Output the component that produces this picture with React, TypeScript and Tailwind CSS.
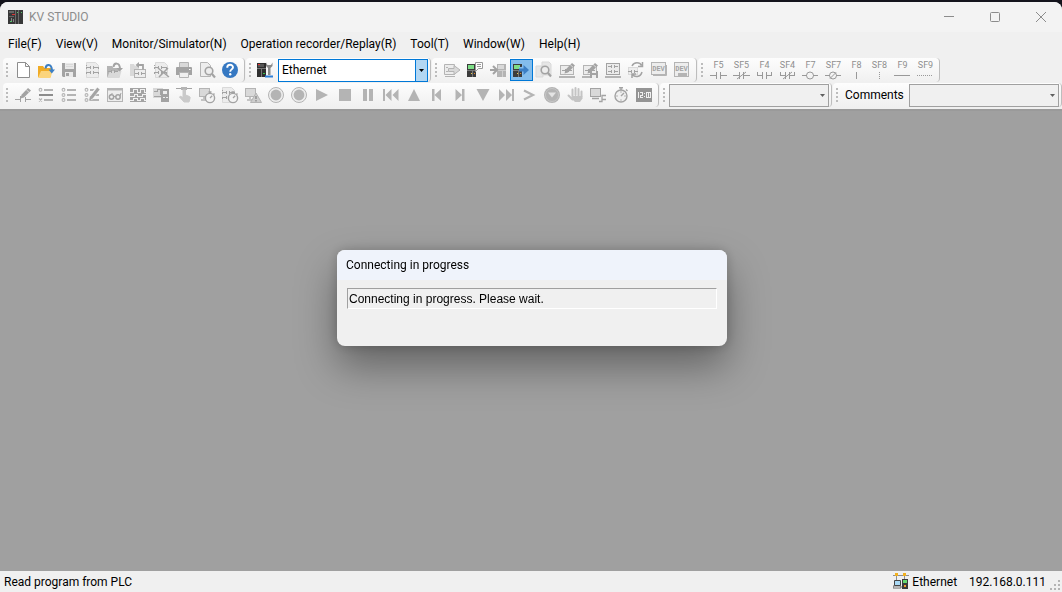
import type { ReactNode } from "react";

const G = "#b4b4b4";
const D = "#a3a3a3";
const L = "#d9d9d9";

/* ---------- icon building blocks (23 x 22 drawing area) ---------- */

const Page = () => (
  <path d="M5.5 3.5h9l3 3v12h-12z" fill="#ececec" stroke={L} />
);

const Rungs = ({ x = 0, y = 0, c = D }: { x?: number; y?: number; c?: string }) => (
  <g transform={`translate(${x} ${y})`} stroke={c} fill="none" shapeRendering="crispEdges">
    <path d="M5.5 6v1M5.500 8v2M5.500 13v2M17.5 8v2M17.500 13v2M6 8.500h3M9.500 7v3M12.500 7v3M13 8.500h5M6 13.500h3M9.500 12v3M12.500 12v3M13 13.500h5" />
  </g>
);

const Contact = ({ x, y, c = D }: { x: number; y: number; c?: string }) => (
  <path
    transform={`translate(${x} ${y})`}
    d="M0 2.500h3.500M3.500 1v3M6.500 1v3M6.500 2.500h3.500"
    stroke={c}
    fill="none"
    shapeRendering="crispEdges"
  />
);

const Watch = ({ x = 0, y = 0 }: { x?: number; y?: number }) => (
  <g transform={`translate(${x} ${y})`} fill="#f4f4f4" stroke={D}>
    <circle cx="14" cy="14" r="4.600" strokeWidth="1.400" />
    <path d="M12.500 8h3M14 8v2M17.500 9.500l1 1M14 14l2.200-2.200" fill="none" strokeWidth="1.300" />
  </g>
);

const Monitor = ({ w = 10 }: { w?: number }) => (
  <g>
    <rect x="3.500" y="4.500" width={w} height="8" fill={L} stroke={G} />
    <path d={`M8 13v2M5 16h7`} stroke={G} strokeWidth="1.500" />
  </g>
);

const Pencil = () => (
  <g>
    <path d="M16 4l3 2.500-7 7-3.500 1 1-3.700z" fill={D} />
    <path d="M14.300 5.800l2.800 2.500" stroke="#f4f4f4" strokeWidth=".7" />
  </g>
);

const Folder = ({ a, b }: { a: string; b: string }) => (
  <g>
    <path d="M3 7h5l1.500 2H16v9H3z" fill={a} />
    <path d="M6 12h11.500L15.500 19H3z" fill={b} />
  </g>
);

const Laptop = () => (
  <g>
    <rect x="4.500" y="6.500" width="13" height="9" fill="#ececec" stroke={G} />
    <path d="M3 17h16v2H3z" fill={G} />
    <Contact x={6} y={9} />
  </g>
);

const Plc = ({ x = 3, y = 5, c = "#3c3c3c", s = "#7dde86", dim = false }: { x?: number; y?: number; c?: string; s?: string; dim?: boolean }) => (
  <g transform={`translate(${x} ${y})`} shapeRendering="crispEdges">
    <path d="M0 0h9v13H0z" fill={c} />
    <path d="M1 1h6v4H1z" fill={s} />
    <path d="M0 6h9v1H0zM5 7h1v6H5z" fill={dim ? "#d0d0d0" : "#777"} />
    {!dim && <path d="M4 9h1v1H4z" fill="#e8c84a" />}
    {!dim && <path d="M7 9h1v1H7z" fill="#e88a2a" />}
  </g>
);

const Arrow = ({ x = 0, y = 0, c = G }: { x?: number; y?: number; c?: string }) => (
  <path
    transform={`translate(${x} ${y})`}
    d="M0 4h6M3 0l4 4-4 4"
    stroke={c}
    strokeWidth="2"
    fill="none"
  />
);

const Lens = () => (
  <g>
    <circle cx="13" cy="12" r="3.800" fill="#ededed" stroke={D} strokeWidth="1.600" />
    <path d="M15.800 14.800L19 18.500" stroke={D} strokeWidth="2.200" />
  </g>
);

const List = ({ strong = false }: { strong?: boolean }) => (
  <g>
    <g fill="none" stroke={G} strokeWidth="1.100">
      <circle cx="5.500" cy="5.800" r="1.400" />
      {!strong && <circle cx="5.500" cy="11" r="1.400" />}
      {strong ? <path d="M4 14.500l3 3M7 14.500l-3 3" /> : <circle cx="5.500" cy="16" r="1.400" />}
    </g>
    <path d="M9 5h9v2H9zM9 15h9v2H9z" fill={G} />
    <path d={strong ? "M4 10h14v2H4z" : "M9 10h9v2H9z"} fill={strong ? "#8d8d8d" : G} />
  </g>
);

const Record = () => (
  <g>
    <circle cx="11" cy="11" r="7.500" fill="#ededed" stroke={G} />
    <circle cx="11" cy="11" r="5.400" fill={G} />
  </g>
);

const Dev = ({ children }: { children?: ReactNode }) => (
  <g>
    {children}
    <text x="10.500" y="12" textAnchor="middle" fontSize="7" fontWeight="700" fill={D} fontFamily="'Liberation Mono', monospace">
      DEV
    </text>
  </g>
);

type Item = { label: string; art: ReactNode; active?: boolean };

/* ---------- toolbars ---------- */

const fileTools: Item[] = [
  {
    label: "New",
    art: <path d="M5.500 3.500h8l4 4v11h-12zM13.500 3.500v4h4" fill="#fff" stroke="#8d8d8d" />,
  },
  {
    label: "Open",
    art: (
      <g>
        <Folder a="#f0ab25" b="#fbd47c" />
        <path d="M10.500 9.500c.5-4.500 6-5.500 6.500 2" fill="none" stroke="#3c7fc4" strokeWidth="2" />
        <path d="M13.500 10.500h6.500l-3.200 4z" fill="#3c7fc4" />
      </g>
    ),
  },
  {
    label: "Save",
    art: (
      <g>
        <path d="M4 4h14v14H5l-1-1z" fill={D} />
        <path d="M7 4h9v6H7z" fill="#e9e9e9" />
        <path d="M8 5.500h7M8 7.500h7" stroke={L} />
        <path d="M7 13h8v5H7z" fill="#e9e9e9" />
        <path d="M8 14h3v3H8z" fill={D} />
      </g>
    ),
  },
  { label: "Ladder", art: <g><Page /><Rungs /></g> },
  {
    label: "Open ladder",
    art: (
      <g>
        <Folder a={G} b={L} />
        <Contact x={4} y={10} c={D} />
        <path d="M9.500 8c.5-4.500 6-5 6.500 1.500" fill="none" stroke={D} strokeWidth="2" />
        <path d="M12.500 9h6.500l-3.200 3.500z" fill={D} />
      </g>
    ),
  },
  {
    label: "Store ladder",
    art: (
      <g>
        <path d="M3 5h4l1 2h4v10H3z" fill={L} />
        <rect x="7.500" y="10.500" width="11" height="8" fill="#ededed" stroke={G} />
        <Contact x={8} y={12} />
        <path d="M10 6h6v4.500" fill="none" stroke={D} strokeWidth="1.800" />
        <path d="M12 3v6L8.500 6z" fill={D} />
      </g>
    ),
  },
  {
    label: "Delete ladder",
    art: <g><Page /><Rungs x={-1} /><path d="M8 9l11 9M18 9L9 18" stroke={D} strokeWidth="1.500" /></g>,
  },
  {
    label: "Print",
    art: (
      <g>
        <path d="M6.500 3.500h9v5h-9z" fill={L} stroke={G} />
        <path d="M3 9q0-1 1-1h14q1 0 1 1v7H3z" fill={D} />
        <path d="M6.500 13.500h9v5h-9z" fill="#efefef" stroke={G} />
        <path d="M16 10.500h1.500" stroke="#fff" />
      </g>
    ),
  },
  { label: "Preview", art: <g><path d="M4.500 3.500h7l3 3v11h-10z" fill="#ededed" stroke={G} /><Lens /></g> },
  {
    label: "Help",
    art: (
      <g>
        <circle cx="11" cy="11" r="8" fill="#3578c2" />
        <path d="M8.200 8.800c0-4 5.800-3.800 5.800-.5 0 2-2.800 2.200-2.800 4.400" fill="none" stroke="#fff" strokeWidth="1.900" />
        <circle cx="11.200" cy="15.300" r="1.200" fill="#fff" />
      </g>
    ),
  },
];

const plcTools: Item[] = [
  {
    label: "Transfer to PLC",
    art: (
      <g>
        <path d="M3.500 5.500h10v10h-10zM4 17.500h10" fill="#ececec" stroke={G} />
        <path d="M5 8.500h2M5 12.500h2" stroke={G} />
        <path d="M7.500 9.500h5.500V6.500l6 4.500-6 4.500v-3H7.500z" fill={L} stroke={G} />
      </g>
    ),
  },
  {
    label: "Transfer with comment",
    art: (
      <g>
        <Plc />
        <path d="M11.500 3.500h7v6h-4l-3 3v-3z" fill="#fff" stroke="#9a9a9a" />
        <path d="M13 5.500h4M13 7.500h4" stroke="#9a9a9a" />
      </g>
    ),
  },
  {
    label: "Read and monitor",
    art: <g><Plc x={10} c={G} s={L} dim /><Arrow x={3} y={7} c={D} /></g>,
  },
  {
    label: "Read from PLC",
    active: true,
    art: (
      <g>
        <Plc />
        <path d="M9 10h4M13 6l5.500 5-5.500 5" fill="none" stroke="#84bdec" strokeWidth="4" />
        <path d="M9 9.500h4.500V6l5.500 5-5.500 5v-3.500H9z" fill="#3c7fc4" />
      </g>
    ),
  },
  {
    label: "Verify",
    art: <g><path d="M9 3h7l2 2v11H9zM3 7h7v11H3z" fill="#e6e6e6" stroke={L} /><g transform="translate(-1 -1)"><Lens /></g></g>,
  },
  { label: "Monitor edit", art: <g><Laptop /><Pencil /></g> },
  {
    label: "Edit and save",
    art: <g><Laptop /><Pencil /><path d="M11 12h8v7h-8z" fill={D} /><path d="M13 12h4v2h-4zM13 16h4v3h-4z" fill="#eee" /></g>,
  },
  {
    label: "Simulator",
    art: (
      <g>
        <rect x="4.500" y="4.500" width="13" height="11" fill="#ececec" stroke={D} />
        <Contact x={6} y={5} />
        <Contact x={6} y={10} />
        <path d="M3 17h16v2H3z" fill={G} />
      </g>
    ),
  },
  {
    label: "Refresh",
    art: (
      <g>
        <rect x="3.500" y="8.500" width="9" height="7" fill="#ededed" stroke={L} />
        <Contact x={3} y={10} />
        <path d="M7 7c2-4.500 8-4 9.500-.5M17.500 3v4.500h-4.500M17 13c-1.500 5.500-7.500 5.500-9.500 2.500M7 19v-4h4" fill="none" stroke={D} strokeWidth="1.500" />
      </g>
    ),
  },
  {
    label: "Device batch",
    art: <Dev><path d="M5 16.500h13.500V6" fill="none" stroke={G} /><rect x="3.500" y="3.500" width="14" height="12" fill="#ededed" stroke={G} /></Dev>,
  },
  {
    label: "Device save",
    art: <Dev><rect x="3.500" y="3.500" width="14" height="14" fill="#ededed" stroke={G} /><path d="M7 14h9v4H7z" fill={G} /></Dev>,
  },
];

const monitorTools: Item[] = [
  {
    label: "Edit contact",
    art: <g><Pencil /><path d="M3 15.500h5.500M8.500 12v6M13.500 13v5M13.500 15.500H19" fill="none" stroke={D} shapeRendering="crispEdges" /></g>,
  },
  { label: "Strong list", art: <List strong /> },
  { label: "List", art: <List /> },
  { label: "Edit list", art: <g><List /><path d="M17 4.500l-8 10" fill="none" stroke="#f6f6f6" strokeWidth="5" /><path d="M17.500 4.500l-7 9" fill="none" stroke={D} strokeWidth="3" /><path d="M9 12l3 2-4 3z" fill={D} /></g> },
  {
    label: "Watch window",
    art: (
      <g fill="none" stroke={G}>
        <rect x="3.500" y="4.500" width="15" height="13" fill="#ededed" />
        <path d="M3 5.500h16" strokeWidth="2" />
        <circle cx="7.500" cy="13" r="2.200" stroke={D} strokeWidth="1.500" />
        <circle cx="14" cy="13" r="2.200" stroke={D} strokeWidth="1.500" />
        <path d="M10 12.500h2M5.500 12l3-3M16 12l1-3" stroke={D} />
      </g>
    ),
  },
  {
    label: "Timing chart",
    art: (
      <g shapeRendering="crispEdges">
        <path d="M3 4h16v14H3z" fill={D} />
        <path d="M3 8.500h3v-3h4v3h3v-3h4v3h2M3 12.500h4v-2h3v2h5v-2h4M3 16.500h3v-2h4v2h3v-2h4v2h2" fill="none" stroke="#f0f0f0" />
      </g>
    ),
  },
  {
    label: "Unit monitor",
    art: (
      <g shapeRendering="crispEdges">
        <path d="M3 4h10v10H3z" fill={L} />
        <path d="M4 7.500h3v-2h3v5h3M4 12.500h8" stroke={D} fill="none" />
        <path d="M11 5h8v13h-8z" fill={D} />
        <path d="M13 7h4v3h-4zM13 13h2v1h-2zM16 13h2v1h-2z" fill="#eee" />
      </g>
    ),
  },
  {
    label: "Touch",
    art: (
      <g>
        <path d="M3 4.500h16" stroke={D} />
        <path d="M8 3h6v3H8z" fill={G} />
        <path d="M10 6h2.500v5l4 1.500q1 .5.500 2L16 18h-5l-4.500-5q0-1.500 3.500.5z" fill="#cacaca" stroke="#cacaca" />
      </g>
    ),
  },
  { label: "Monitor timer", art: <g><Monitor /><Watch /></g> },
  { label: "Ladder timer", art: <g><g transform="translate(-2 0)"><Page /><Rungs /></g><Watch /></g> },
  {
    label: "Monitor alert",
    art: <g><Monitor /><path d="M14 9l5.500 9.500h-11z" fill="#cdcdcd" stroke={G} /><path d="M14 12v3M14 16v1.500" stroke="#8d8d8d" strokeWidth="1.400" /></g>,
  },
  { label: "Record", art: <Record /> },
  { label: "Record stop", art: <Record /> },
  { label: "Play", art: <path d="M5 5l12 6-12 6z" fill={G} /> },
  { label: "Stop", art: <path d="M5 5h12v12H5z" fill={G} /> },
  { label: "Pause", art: <path d="M6 5h4v12H6zM12 5h4v12h-4z" fill={G} /> },
  { label: "First", art: <path d="M3 5h2v12H3zM11.500 5v12L5.500 11zM18.500 5v12l-6-6z" fill={G} /> },
  { label: "Up", art: <path d="M11 5l6 12H5z" fill={G} /> },
  { label: "Step back", art: <path d="M6 5h2.500v12H6zM15 5v12l-6.500-6z" fill={G} /> },
  { label: "Step forward", art: <path d="M13 5h2.500v12H13zM6.500 5v12l6.500-6z" fill={G} /> },
  { label: "Down", art: <path d="M4.500 5h13l-6.500 12z" fill={G} /> },
  { label: "Last", art: <path d="M4 5v12l6-6zM11 5v12l6-6zM17 5h2v12h-2z" fill={G} /> },
  { label: "Next", art: <path d="M6 6.500l9 4.500-9 4.500" fill="none" stroke={G} strokeWidth="2.200" /> },
  {
    label: "Run to",
    art: <g><circle cx="11" cy="11" r="8" fill={G} /><circle cx="11" cy="11" r="6.500" fill="none" stroke="#c6c6c6" /><path d="M7 8.500h8L11 13.500z" fill="#e4e4e4" /></g>,
  },
  {
    label: "Hold",
    art: (
      <g fill="none" stroke="#c4c4c4" strokeWidth="2" strokeLinecap="round">
        <path d="M8.500 12V5.500M11.500 11V4M14.500 12V5M17.500 12V7.500M4.500 11.500l4 4" />
        <path d="M8 12h10.500v2.500L16 18h-5l-4-4z" fill="#c4c4c4" stroke="none" />
      </g>
    ),
  },
  {
    label: "Network",
    art: <g><rect x="3.500" y="4.500" width="10" height="8" fill={L} stroke={D} /><path d="M5 14.500h7M12 17.500h3v-6h4M15 15.500h4" stroke={D} fill="none" strokeWidth="1.300" /></g>,
  },
  {
    label: "Stopwatch",
    art: (
      <g fill="none" stroke={D} strokeWidth="1.400">
        <circle cx="11" cy="12" r="6" fill="#f0f0f0" />
        <path d="M9 3.700h4M11 4v2M16 5.500l1.500 1.500M11 12l3-3M11 7.500v1M11 15.500v1M6.500 12h1M14.500 12h1" />
      </g>
    ),
  },
  {
    label: "Clock",
    art: (
      <g>
        <path d="M3 4h16v14H3z" fill="#949494" />
        <g fill="none" stroke="#f0f0f0" shapeRendering="crispEdges">
          <path d="M5.500 8v6M7 8.500h2.500v2.500H7.500v2.500H10M11.500 9v1M11.500 12v1M13.500 8v6M15.500 8v6M17.500 8v6M13 8.500h5M13 13.500h5" />
        </g>
      </g>
    ),
  },
];

const keyTools: { key: string; d: string }[] = [
  { key: "F5", d: "M3 4.500h6M9.500 1v7M13.500 1v7M14 4.500h6" },
  { key: "SF5", d: "M3 4.500h6M9.500 1v7M13.500 1v7M14 4.500h6M7 8L16 1" },
  { key: "F4", d: "M4.500 1v4M4 4.500h5M9.500 1v7M13.500 1v7M14 4.500h5M18.500 1v4" },
  { key: "SF4", d: "M4.500 1v4M4 4.500h5M9.500 1v7M13.500 1v7M14 4.500h5M18.500 1v4M7 8L16 1" },
  { key: "F7", d: "M3 4.500h5M14 4.500h5M14.500 4.500a3.500 3.500 0 1 1-7 0a3.500 3.500 0 1 1 7 0" },
  { key: "SF7", d: "M3 4.500h5M14 4.500h5M14.500 4.500a3.500 3.500 0 1 1-7 0a3.500 3.500 0 1 1 7 0M8 7.500L14 1.500" },
  { key: "F8", d: "M11.500 1v7" },
  { key: "SF8", d: "M11.500 1v1M11.500 3v1M11.500 5v1M11.500 7v1" },
  { key: "F9", d: "M3 4.500h16" },
  { key: "SF9", d: "M3 4.500h1M5 4.500h1M7 4.500h1M9 4.500h1M11 4.500h1M13 4.500h1M15 4.500h1M17 4.500h1" },
];

const ToolButton = ({ item }: { item: Item }) => (
  <button
    type="button"
    aria-label={item.label}
    className={
      item.active
        ? "h-[22px] w-[23px] shrink-0 bg-[#84bdec] outline outline-1 -outline-offset-1 outline-[#0078d7]"
        : "h-[22px] w-[23px] shrink-0"
    }
  >
    <svg viewBox="0 0 23 22" className="block h-[22px] w-[23px]">{item.art}</svg>
  </button>
);

const KeyButton = ({ k, d }: { k: string; d: string }) => (
  <button type="button" className="flex h-[22px] w-[23px] shrink-0 flex-col items-center">
    <span className="font-['Roboto',sans-serif] text-[9px] leading-[12px] text-[#8f8f8f]">{k}</span>
    <svg viewBox="0 0 23 9" className="block h-[9px] w-[23px] shrink-0">
      <path d={d} fill="none" stroke="#999" />
    </svg>
  </button>
);

const Strip = ({ label, children, className = "" }: { label: string; children: ReactNode; className?: string }) => (
  <div
    role="toolbar"
    aria-label={label}
    className={`flex h-6 items-center rounded-sm border-r border-[#bdbdbd] bg-linear-to-b from-[#fdfdfd] to-[#f0f0f0] pr-[2px] pl-[3px] ${className}`}
  >
    <span className="mr-1 flex flex-col gap-[2px]">
      {[0, 1, 2, 3].map((n) => (
        <span key={n} className="size-[2px] bg-[#bcbcbc]" />
      ))}
    </span>
    {children}
  </div>
);

const Chevron = ({ className }: { className: string }) => (
  <span className={`pointer-events-none absolute inset-y-px right-px flex w-[12px] items-center justify-center ${className}`}>
    <svg viewBox="0 0 5 3" className="h-[3px] w-[5px]">
      <path d="M0 0h5L2.500 3z" fill="currentColor" />
    </svg>
  </span>
);

const menus = ["File(F)", "View(V)", "Monitor/Simulator(N)", "Operation recorder/Replay(R)", "Tool(T)", "Window(W)", "Help(H)"];

export default function App() {
  return (
    <div className="flex min-h-screen flex-col bg-[#14141c] pt-[2px] font-['Roboto','Open_Sans',sans-serif] text-[12px] text-black">
      <header className="rounded-t-lg bg-[#f0f0f0]">
        <div className="flex h-[30px] items-center rounded-t-lg bg-[#f3f3f3] pl-2 text-[#8c8c8c]">
          <svg viewBox="0 0 15 14" className="mr-[6px] h-[14px] w-[15px]" shapeRendering="crispEdges">
            <path d="M0 0h15v14H0z" fill="#383838" />
            <path d="M1 1h5v2H1zM1 6h5v1H1z" fill="#666" />
            <path d="M7.500 0v14M10.500 0v14" stroke="#6a6a6a" />
            <path d="M4 4h3v1H4z" fill="#d33" />
            <path d="M2 11h2v1H2zM9 2h1v1H9zM13 2h1v1h-1z" fill="#57c26b" />
            <path d="M3 8h1v3H3zM5 9h1v3H5z" fill="#888" />
          </svg>
          <h1 className="flex-1">KV STUDIO</h1>
          <div className="flex h-full gap-1">
            <button type="button" aria-label="Minimize" className="flex h-full w-[42px] items-center justify-center">
              <svg viewBox="0 0 10 10" className="size-[10px]"><path d="M0 4.500h10" stroke="#8c8c8c" /></svg>
            </button>
            <button type="button" aria-label="Maximize" className="flex h-full w-[42px] items-center justify-center">
              <svg viewBox="0 0 10 10" className="size-[10px]"><rect x=".5" y=".5" width="9" height="9" rx="1" fill="none" stroke="#8c8c8c" /></svg>
            </button>
            <button type="button" aria-label="Close" className="flex h-full w-[42px] items-center justify-center">
              <svg viewBox="0 0 10 10" className="size-[10px]"><path d="M0 0l10 10M10 0L0 10" stroke="#8c8c8c" /></svg>
            </button>
          </div>
        </div>

        <nav className="flex h-[26px] items-center gap-[14px] pl-2">
          {menus.map((m) => (
            <button key={m} type="button" className="pb-[2px] whitespace-nowrap">{m}</button>
          ))}
        </nav>

        <div className="mb-px flex gap-px pl-[3px]">
          <Strip label="File">
            {fileTools.map((t) => <ToolButton key={t.label} item={t} />)}
          </Strip>
          <Strip label="Connection">
            <button type="button" aria-label="Communication settings" className="mr-[2px] h-[22px] w-[21px]">
              <svg viewBox="0 0 21 22" className="block h-[22px] w-[21px]">
                <path d="M2 4h9v14H2z" fill="#2f2f2f" />
                <path d="M3 5h6v3H3z" fill="#555" />
                <path d="M2 9.500h9M6.500 10v8" stroke="#777" />
                <path d="M3 5h2v1H3z" fill="#e33" />
                <path d="M8 14h2v1H8z" fill="#35c24a" />
                <path d="M11 3.500v3.500l2 2v7h2.500V9l2-2V3.500L16 6h-3.500z" fill="#8a8a8a" />
                <path d="M10 17.500h8" stroke="#2f7fd8" strokeWidth="2" />
              </svg>
            </button>
            <div className="relative">
              <select
                aria-label="Connection"
                defaultValue="Ethernet"
                className="block h-[23px] w-[150px] appearance-none border border-[#0078d7] bg-white pl-[3px]"
              >
                <option>Ethernet</option>
              </select>
              <Chevron className="border-l border-[#0078d7] bg-[#b3d7f3] text-black" />
            </div>
          </Strip>
          <Strip label="PLC">
            {plcTools.map((t) => <ToolButton key={t.label} item={t} />)}
          </Strip>
          <Strip label="Ladder symbols">
            {keyTools.map((t) => <KeyButton key={t.key} k={t.key} d={t.d} />)}
          </Strip>
        </div>

        <div className="mb-[2px] flex gap-px pl-[3px]">
          <Strip label="Monitor">
            {monitorTools.map((t) => <ToolButton key={t.label} item={t} />)}
          </Strip>
          <Strip label="Search">
            <div className="relative">
              <select aria-label="Device" className="block h-[23px] w-[160px] appearance-none border border-[#a0a0a0] bg-[#f0f0f0]" />
              <Chevron className="text-[#606060]" />
            </div>
          </Strip>
          <Strip label="Comments" className="flex-1">
            <label htmlFor="comments" className="mr-[5px] ml-[3px]">Comments</label>
            <div className="relative flex-1">
              <select id="comments" className="block h-[23px] w-full appearance-none border border-[#a0a0a0] bg-[#f0f0f0]" />
              <Chevron className="text-[#606060]" />
            </div>
          </Strip>
        </div>
      </header>

      <main className="flex-1 border-t-2 border-[#9a9a9a] bg-[#a0a0a0]" />

      <footer className="flex h-[21px] items-center bg-[#f0f0f0] pl-1">
        <span className="flex-1">Read program from PLC</span>
        <svg viewBox="0 0 17 17" className="mr-[2px] size-[17px]">
          <path d="M0 2.500h16M3.500 3v4M11.500 3v3" stroke="#8f8f8f" />
          <path d="M2 0h3v3H2zM10 0h3v3h-3z" fill="#f2b01e" />
          <path d="M1.500 7.500h6v5h-6z" fill="#a9d9f5" stroke="#444" />
          <path d="M0 13h8v2H0z" fill="#fff" stroke="#444" strokeWidth=".8" />
          <path d="M9 6h6v10H9z" fill="#3c3c3c" />
          <path d="M10 7h4v3h-4z" fill="#64d86e" />
          <path d="M11 12h2v2h-2z" fill="#f0a030" />
        </svg>
        <span className="mr-3">Ethernet</span>
        <span className="mr-1">192.168.0.111</span>
        <svg viewBox="0 0 12 12" className="mt-2 size-3">
          <path d="M8 0h2v2H8zM4 4h2v2H4zM8 4h2v2H8zM0 8h2v2H0zM4 8h2v2H4zM8 8h2v2H8z" fill="#b4b4b4" />
        </svg>
      </footer>

      <div className="fixed inset-0 flex items-center justify-center pt-1 pl-[2px]">
        <section
          role="dialog"
          aria-labelledby="dialog-title"
          className="w-[390px] overflow-hidden rounded-lg bg-[#f0f0f0] shadow-[0_20px_40px_rgba(0,0,0,0.38),0_0_12px_rgba(0,0,0,0.2)]"
        >
          <h2 id="dialog-title" className="flex h-[30px] items-center bg-[#eff3fb] px-[9px]">Connecting in progress</h2>
          <div className="px-[10px] pt-2 pb-[37px]">
            <p className="h-[21px] border border-t-[#a0a0a0] border-r-white border-b-white border-l-[#a0a0a0] pl-px font-['Liberation_Sans',sans-serif] leading-[20px]">
              Connecting in progress. Please wait.
            </p>
          </div>
        </section>
      </div>
    </div>
  );
}
